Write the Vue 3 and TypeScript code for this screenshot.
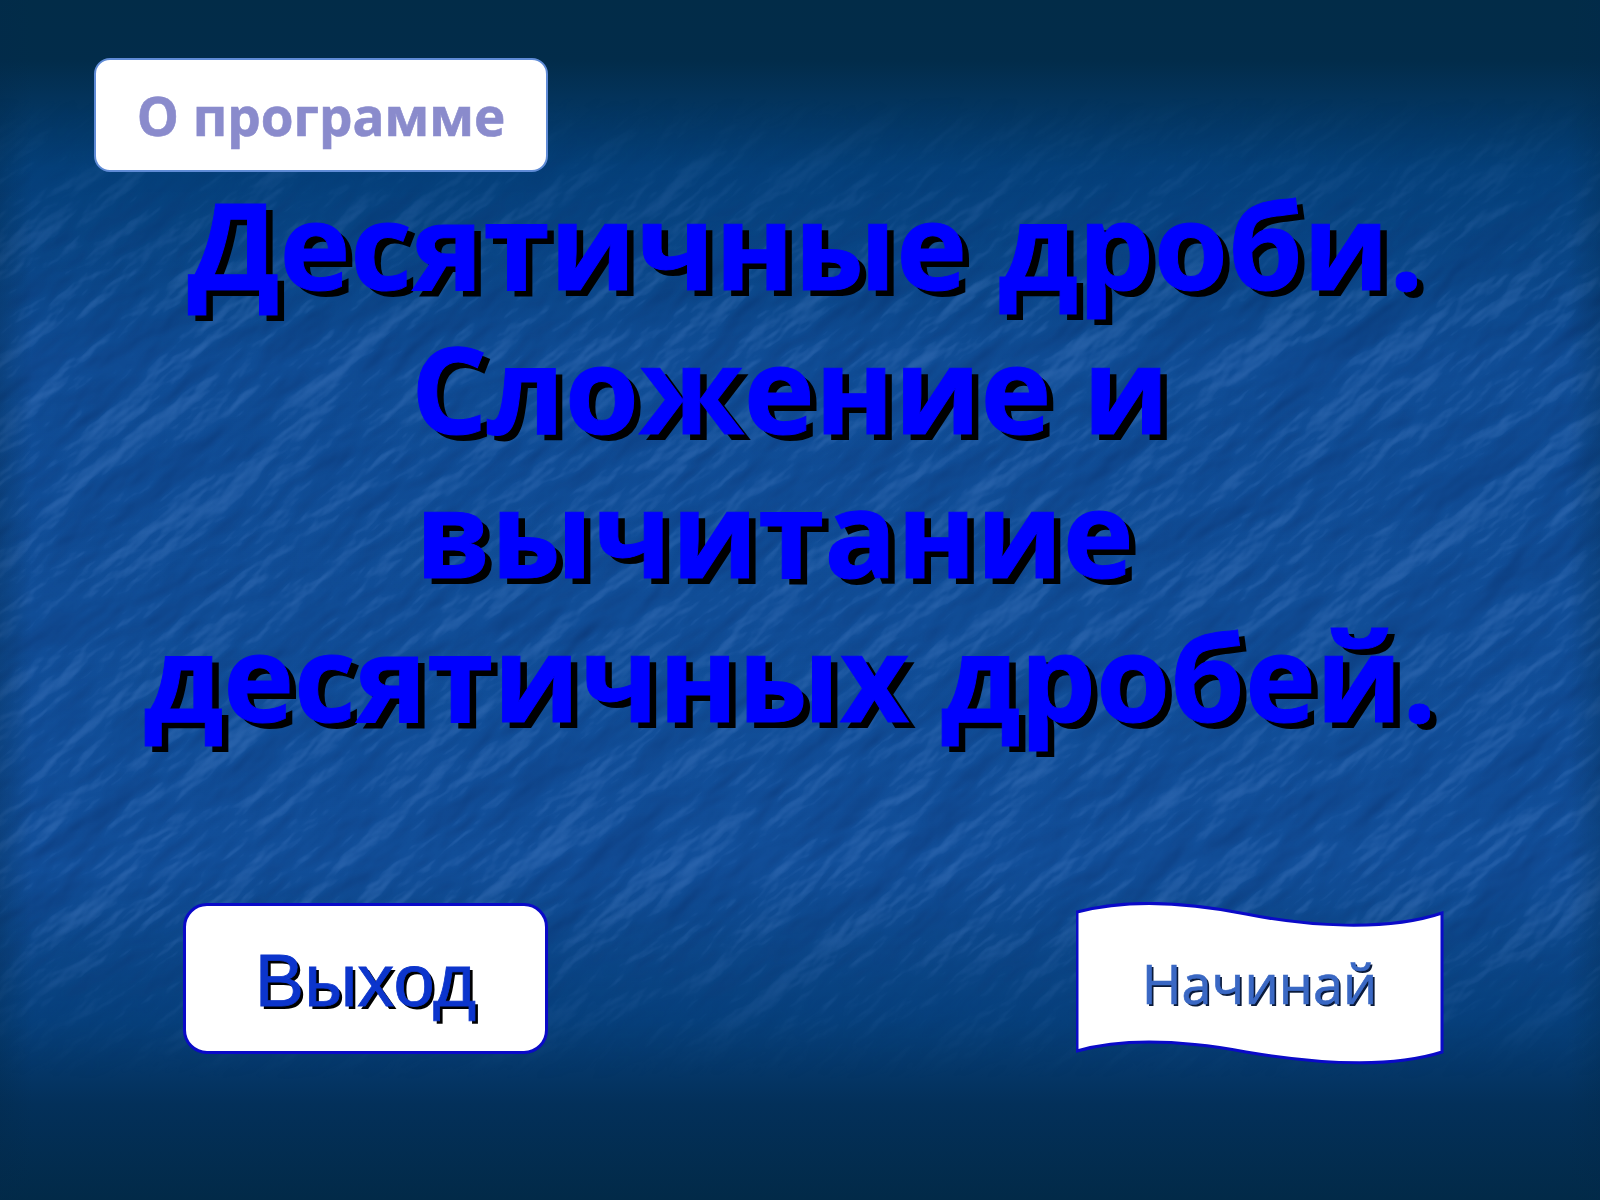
<script setup lang="ts">
const titleLines: string[] = [
  '\u00a0Десятичные дроби.',
  'Сложение и',
  'вычитание\u00a0',
  'десятичных дробей.',
]
</script>

<template>
  <main class="slide">
    <svg class="texture" width="1600" height="1200" viewBox="0 0 1600 1200" aria-hidden="true">
      <defs>
        <linearGradient id="baseV" x1="0" y1="0" x2="0" y2="1">
          <stop offset="0" stop-color="#022c48" />
          <stop offset="0.05" stop-color="#022c4a" />
          <stop offset="0.14" stop-color="#05407a" />
          <stop offset="0.3" stop-color="#104d96" />
          <stop offset="0.72" stop-color="#124f9a" />
          <stop offset="0.85" stop-color="#07407c" />
          <stop offset="0.92" stop-color="#03305a" />
          <stop offset="1" stop-color="#022a48" />
        </linearGradient>
        <linearGradient id="fadeV" x1="0" y1="0" x2="0" y2="1">
          <stop offset="0.08" stop-color="#000" />
          <stop offset="0.24" stop-color="#fff" />
          <stop offset="0.76" stop-color="#fff" />
          <stop offset="0.9" stop-color="#000" />
        </linearGradient>
        <linearGradient id="edgeH" x1="0" y1="0" x2="1" y2="0">
          <stop offset="0" stop-color="#02294a" stop-opacity="0.3" />
          <stop offset="0.02" stop-color="#02294a" stop-opacity="0" />
          <stop offset="0.98" stop-color="#02294a" stop-opacity="0" />
          <stop offset="1" stop-color="#02294a" stop-opacity="0.3" />
        </linearGradient>
        <mask id="fadeMask">
          <rect width="1600" height="1200" fill="url(#fadeV)" />
        </mask>
        <filter id="rock" x="0" y="0" width="100%" height="100%" color-interpolation-filters="sRGB">
          <feTurbulence type="fractalNoise" baseFrequency="0.006 0.019" numOctaves="6" seed="14" result="n" />
          <feDiffuseLighting in="n" surfaceScale="8" diffuseConstant="1" lighting-color="#ffffff">
            <feDistantLight azimuth="90" elevation="55" />
          </feDiffuseLighting>
          <feGaussianBlur stdDeviation="1.2" />
          <feColorMatrix values="0 0 0 0 0.5  0 0 0 0 0.68  0 0 0 0 0.95  1.3 0 0 0 -1.09" />
        </filter>
        <filter id="rockDark" x="0" y="0" width="100%" height="100%" color-interpolation-filters="sRGB">
          <feTurbulence type="fractalNoise" baseFrequency="0.006 0.019" numOctaves="6" seed="14" result="n" />
          <feDiffuseLighting in="n" surfaceScale="8" diffuseConstant="1" lighting-color="#ffffff">
            <feDistantLight azimuth="90" elevation="55" />
          </feDiffuseLighting>
          <feGaussianBlur stdDeviation="2" />
          <feColorMatrix values="0 0 0 0 0.02  0 0 0 0 0.14  0 0 0 0 0.36  -0.9 0 0 0 0.75" />
        </filter>
      </defs>
      <rect width="1600" height="1200" fill="url(#baseV)" />
      <g mask="url(#fadeMask)">
        <rect x="-500" y="-600" width="2600" height="2400" filter="url(#rockDark)" transform="rotate(-38 800 600)" />
        <rect x="-500" y="-600" width="2600" height="2400" filter="url(#rock)" transform="rotate(-38 800 600)" />
      </g>
      <rect width="1600" height="1200" fill="url(#edgeH)" />
    </svg>

    <header class="top-row">
      <button class="about-btn" type="button">О программе</button>
    </header>

    <h1 class="title">
      <span v-for="line in titleLines" :key="line" class="title-line">{{ line }}</span>
    </h1>

    <footer class="bottom-row">
      <button class="exit-btn" type="button"><span class="exit-label">Выход</span></button>
      <button class="start-btn" type="button">
        <svg class="flag" width="370" height="164" viewBox="0 0 370 164" aria-hidden="true">
          <path d="M1 10 C50 -3 110 0 170 12 C230 24 310 30 366 11 L366 150 C310 168 230 160 170 150 C110 139 50 135 1 149 Z" fill="#fff" stroke="#0a0ac8" stroke-width="3" />
        </svg>
        <span class="start-label">Начинай</span>
      </button>
    </footer>
  </main>
</template>

<style scoped>
.slide {
  position: relative;
  width: 1600px;
  height: 1200px;
  overflow: hidden;
  display: flex;
  flex-direction: column;
  font-family: "Open Sans", "Noto Sans", sans-serif;
}
.texture {
  position: absolute;
  inset: 0;
}
.top-row,
.title,
.bottom-row {
  position: relative;
}
.top-row {
  padding: 58px 0 0 94px;
}
.about-btn {
  display: block;
  width: 454px;
  height: 114px;
  border: 2px solid #5f8bd6;
  border-radius: 16px;
  background: #fff;
  color: #8a8bcc;
  font: 700 53px "Open Sans", sans-serif;
  -webkit-text-stroke: 0.6px #8a8bcc;
  padding: 0;
}
.title {
  margin: 0;
  width: 1580px;
  text-align: center;
  color: #0000ff;
  font: 700 120px/144px "Open Sans", sans-serif;
  -webkit-text-stroke: 1px #0000ff;
  text-shadow: 7px 6px 0 #000;
}
.title-line {
  display: block;
  white-space: pre;
}
.bottom-row {
  position: absolute;
  left: 183px;
  top: 903px;
  width: 1260px;
  display: flex;
  justify-content: space-between;
  align-items: flex-start;
}
.exit-btn {
  width: 365px;
  height: 151px;
  border: 3px solid #0a0ac8;
  border-radius: 24px;
  background: #fff;
  padding: 4px 0 0;
}
.exit-label {
  color: #0c35cc;
  font: 400 74px "Liberation Sans", sans-serif;
  -webkit-text-stroke: 0.8px #0c35cc;
  text-shadow: 3px 3px 0 #000;
}
.start-btn {
  position: relative;
  width: 367px;
  height: 160px;
  border: 0;
  background: none;
  padding: 0;
}
.flag {
  position: absolute;
  left: 0;
  top: -1px;
}
.start-label {
  position: relative;
  color: #3a68c4;
  font: 400 54px "Open Sans", sans-serif;
  -webkit-text-stroke: 0.6px #3a68c4;
  text-shadow: 2px 2px 0 #0a1a3a;
}
</style>
